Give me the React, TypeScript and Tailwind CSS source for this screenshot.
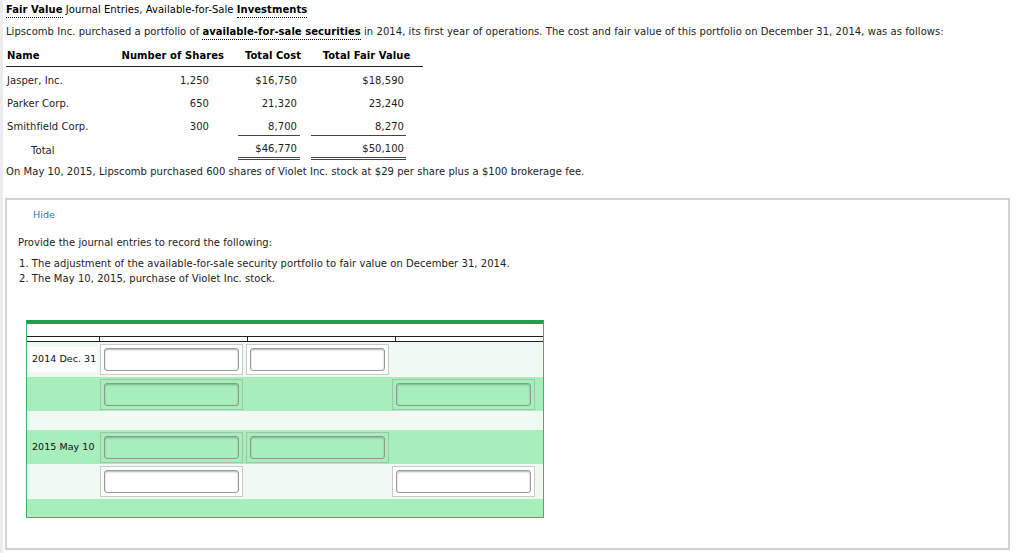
import React from "react";

type Holding = {
  name: string;
  shares: string;
  cost: string;
  fair: string;
};

const holdings: Holding[] = [
  { name: "Jasper, Inc.", shares: "1,250", cost: "$16,750", fair: "$18,590" },
  { name: "Parker Corp.", shares: "650", cost: "21,320", fair: "23,240" },
  { name: "Smithfield Corp.", shares: "300", cost: "8,700", fair: "8,270" },
];

type Cell = "white" | "green" | null;

interface JournalRow {
  date?: string;
  height: string;
  green: boolean;
  account: Cell;
  debit: Cell;
  credit: Cell;
  dateBox?: boolean;
}

const journal: JournalRow[] = [
  { date: "2014 Dec. 31", height: "h-[35px]", green: false, account: "white", debit: "white", credit: null, dateBox: true },
  { height: "h-[34px]", green: true, account: "green", debit: null, credit: "green" },
  { height: "h-[19px]", green: false, account: null, debit: null, credit: null },
  { date: "2015 May 10", height: "h-[34px]", green: true, account: "green", debit: "green", credit: null },
  { height: "h-[35px]", green: false, account: "white", debit: null, credit: "white" },
  { height: "h-[18px]", green: true, account: null, debit: null, credit: null },
];

function Term({ children }: { children: React.ReactNode }) {
  return (
    <span className="font-bold text-black border-b border-dotted border-black pb-[2px]">
      {children}
    </span>
  );
}

function InputBox({ kind }: { kind: Cell }) {
  if (!kind) return null;
  const green = kind === "green";
  return (
    <div
      className={`w-[143px] h-[31px] border p-[3px] ${
        green ? "border-[#9cc7a8]" : "border-[#c9c9c9] bg-white"
      }`}
    >
      <div
        className={`w-full h-full rounded-[3px] border ${
          green
            ? "border-[#8a9a8e] bg-[#a8edbc] shadow-[inset_0_1px_2px_rgba(0,0,0,0.25)]"
            : "border-[#9a9a9a] bg-white shadow-[inset_0_1px_2px_rgba(0,0,0,0.3)]"
        }`}
      />
    </div>
  );
}

const cols = "grid grid-cols-[110px_120px_74px_113px]";

export default function App() {
  return (
    <div className="w-[1024px] h-[553px] overflow-hidden bg-white border-l-[3px] border-[#ececec] font-['DejaVu_Sans',Verdana,sans-serif] text-[10px] tracking-[0.05px] text-[#222]">
      <div className="pl-[3px] pt-[2px]">
        {/* heading */}
        <div className="h-[16px] leading-[16px] text-black whitespace-nowrap">
          <Term>Fair Value</Term> Journal Entries, Available-for-Sale{" "}
          <Term>Investments</Term>
        </div>

        <div className="mt-[6px] h-[16px] leading-[16px] whitespace-nowrap">
          Lipscomb Inc. purchased a portfolio of{" "}
          <Term>available-for-sale securities</Term> in 2014, its first year of
          operations. The cost and fair value of this portfolio on December 31,
          2014, was as follows:
        </div>

        {/* portfolio table */}
        <div className="mt-[5px] w-[417px]">
          <div className={`${cols} h-[22px] items-end pb-[3px] leading-[14px] border-b border-[#222] font-bold text-black`}>
            <div className="pl-[1px]">Name</div>
            <div className="text-right pr-[12px]">Number of Shares</div>
            <div className="text-center">Total Cost</div>
            <div className="text-center">Total Fair Value</div>
          </div>
          {holdings.map((h, i) => {
            const last = i === holdings.length - 1;
            return (
              <div key={h.name} className={`${cols} h-[23px]`}>
                <div className="pl-[1px] pt-[4px] flex items-center">{h.name}</div>
                <div className="pr-[27px] pt-[4px] flex items-center justify-end">
                  {h.shares}
                </div>
                <div className="pl-[2px] pr-[10px] flex">
                  <div
                    className={`flex-1 flex items-center justify-end pt-[4px] pr-[3px] ${
                      last ? "border-b border-[#444]" : ""
                    }`}
                  >
                    {h.cost}
                  </div>
                </div>
                <div className="pl-[1px] pr-[17px] flex">
                  <div
                    className={`flex-1 flex items-center justify-end pt-[4px] pr-[2px] ${
                      last ? "border-b border-[#444]" : ""
                    }`}
                  >
                    {h.fair}
                  </div>
                </div>
              </div>
            );
          })}
          <div className={`${cols} h-[24px]`}>
            <div className="pl-[25px] pt-[4px] flex items-center">Total</div>
            <div />
            <div className="pl-[2px] pr-[10px] flex">
              <div className="flex-1 flex items-center justify-end pt-[4px] pr-[3px] border-b-[3px] border-double border-[#444]">
                $46,770
              </div>
            </div>
            <div className="pl-[1px] pr-[17px] flex">
              <div className="flex-1 flex items-center justify-end pt-[4px] pr-[2px] border-b-[3px] border-double border-[#444]">
                $50,100
              </div>
            </div>
          </div>
        </div>

        <div className="mt-[4px] h-[16px] leading-[16px]">
          On May 10, 2015, Lipscomb purchased 600 shares of Violet Inc. stock at
          $29 per share plus a $100 brokerage fee.
        </div>
      </div>

      {/* answer panel */}
      <div className="mt-[18px] ml-[2px] w-[1005px] h-[352px] border-2 border-[#d3d3d3]">
        <div className="mt-[8px] ml-[26px] h-[14px] leading-[14px] text-[9.5px] text-[#2f6fc0]">
          Hide
        </div>
        <div className="mt-[13px] ml-[11px] h-[16px] leading-[16px]">
          Provide the journal entries to record the following:
        </div>
        <div className="mt-[5px] ml-[12px] leading-[15px]">
          <div>1. The adjustment of the available-for-sale security portfolio to fair value on December 31, 2014.</div>
          <div>2. The May 10, 2015, purchase of Violet Inc. stock.</div>
        </div>

        {/* journal grid */}
        <div className="mt-[34px] ml-[19px] w-[518px] border-t-4 border-t-[#1fa04a] border-x border-b border-[#3fb35f] text-[9.5px] text-[#111]">
          <div className="h-[12px] bg-white" />
          <div className="grid grid-cols-[72px_148px_148px_148px] h-[6px] border-y border-[#222] bg-white">
            <div />
            <div className="border-l border-[#222]" />
            <div className="border-l border-[#222]" />
            <div className="border-l border-[#222]" />
          </div>
          {journal.map((r, i) => (
            <div
              key={i}
              className={`grid grid-cols-[73px_146px_146px_151px] items-center ${r.height} ${
                r.green ? "bg-[#a8edbc]" : "bg-[#f0faf3]"
              }`}
            >
              <div className="h-full flex items-center">
                {r.date && (
                  <div
                    className={`w-[70px] h-[25px] flex items-center pl-[5px] whitespace-nowrap ${
                      r.dateBox ? "bg-[#fbfefc]" : ""
                    }`}
                  >
                    {r.date}
                  </div>
                )}
              </div>
              <div>
                <InputBox kind={r.account} />
              </div>
              <div>
                <InputBox kind={r.debit} />
              </div>
              <div>
                <InputBox kind={r.credit} />
              </div>
            </div>
          ))}
        </div>
      </div>
    </div>
  );
}
